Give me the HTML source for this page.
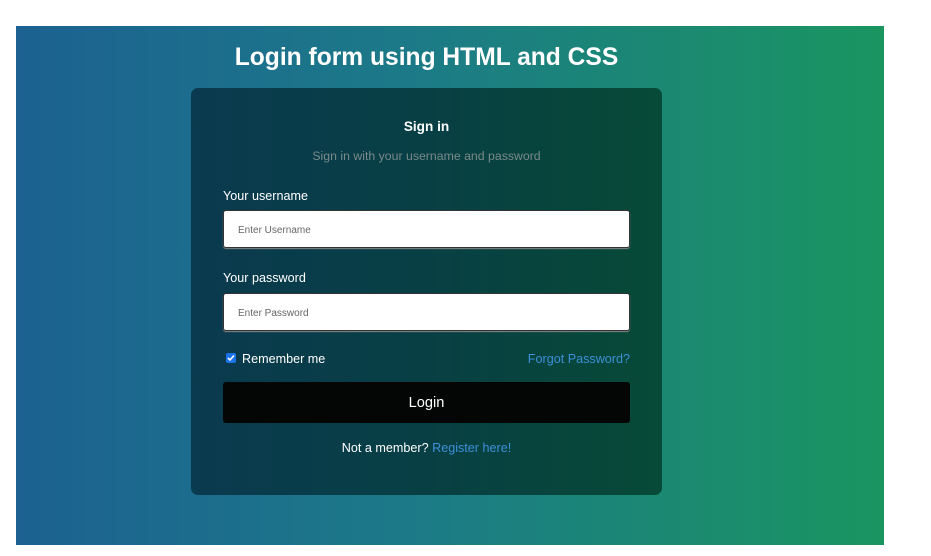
<!DOCTYPE html>
<html><head><style>
*{margin:0;padding:0;box-sizing:border-box}
body{width:931px;height:556px;background:#fff;font-family:"Liberation Sans",Arial,sans-serif;position:relative;overflow:hidden}
.bg{position:absolute;left:16px;top:26px;width:868px;height:519px;background:linear-gradient(90deg,#1c6191,#1c7a88 45%,#1a9560)}
h1{position:absolute;left:0;width:853px;top:44px;text-align:center;color:#fff;font-size:24.6px;font-weight:bold}
.card{position:absolute;left:191px;top:88px;width:471px;height:407px;border-radius:7px;background:linear-gradient(90deg,#0a3a4f,#083f44 50%,#074a37)}
.t{position:absolute;width:100%;text-align:center}
.lbl{position:absolute;left:32px;color:#fff;font-size:12.6px}
.in{position:absolute;left:32px;width:407px;height:38px;background:#fff;border-radius:3px;border:1px solid #333;font-size:10px;color:#666;padding:0 14px;line-height:39px;box-shadow:0 1px 1px #888}
.btn{position:absolute;left:32px;top:294px;width:407px;height:41px;background:#030605;border-radius:3px;color:#fff;font-size:14.6px;text-align:center;line-height:42px}
a{color:#3d8fd8;text-decoration:none}
.cb{position:absolute;left:35px;top:265px;width:10px;height:10px;background:#1a73e8;border-radius:2px;overflow:hidden}
.cb svg{display:block}
</style></head><body>
<div class="bg"></div>
<h1>Login form using HTML and CSS</h1>
<div class="card">
<div class="t" style="top:31px;color:#fff;font-weight:bold;font-size:13.6px">Sign in</div>
<div class="t" style="top:61px;color:#7a8a8a;font-size:12.3px">Sign in with your username and password</div>
<div class="lbl" style="top:101px">Your username</div>
<div class="in" style="top:122px">Enter Username</div>
<div class="lbl" style="top:183px">Your password</div>
<div class="in" style="top:205px">Enter Password</div>
<div class="cb"><svg width="10" height="10" viewBox="0 0 10 10"><path d="M2 5l2 2 4-4.5" stroke="#fff" stroke-width="1.6" fill="none"/></svg></div>
<div class="lbl" style="left:51px;top:264px">Remember me</div>
<div class="lbl" style="left:auto;right:32px;top:264px"><a>Forgot Password?</a></div>
<div class="btn">Login</div>
<div class="t" style="top:353px;color:#fff;font-size:12.6px">Not a member? <a>Register here!</a></div>
</div>
</body></html>
